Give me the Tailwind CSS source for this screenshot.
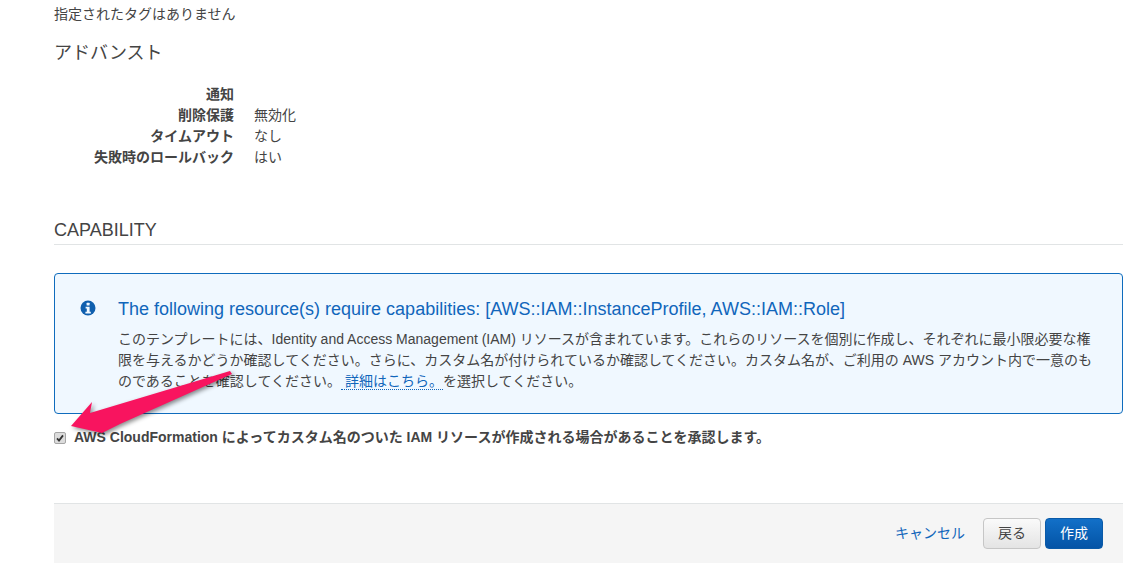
<!DOCTYPE html>
<html lang="ja">
<head>
  <meta charset="UTF-8" />
  <title>CloudFormation - Review</title>
  <script src="https://cdn.jsdelivr.net/npm/@tailwindcss/browser@4"></script>
</head>
<body class="bg-white h-[572px] overflow-hidden relative text-[14px] leading-[21px] text-[#444] font-['Liberation_Sans','Noto_Sans_CJK_JP',sans-serif]">

  <main class="ml-[54px] w-[1069px]">
    <!-- Tags -->
    <p class="pt-[4px]">指定されたタグはありません</p>

    <!-- Advanced -->
    <h2 class="mt-[16px] text-[18px] leading-[24px]">アドバンスト</h2>
    <dl class="mt-[19px] grid grid-cols-[180px_1fr] gap-x-[20px]">
      <dt class="font-bold text-right">通知</dt><dd></dd>
      <dt class="font-bold text-right">削除保護</dt><dd>無効化</dd>
      <dt class="font-bold text-right">タイムアウト</dt><dd>なし</dd>
      <dt class="font-bold text-right">失敗時のロールバック</dt><dd>はい</dd>
    </dl>

    <!-- Capability -->
    <h2 class="mt-[50px] pb-[2px] text-[18px] leading-[24px] border-b border-[#e1e4e5]">CAPABILITY</h2>

    <div class="mt-[28px] h-[141px] flex border border-[#0f6cbd] rounded-[4px] bg-[#f0f8ff]">
      <div class="w-[63px] shrink-0 pt-[26px] pl-[25px]">
        <svg class="w-[16px] h-[16px]" viewBox="0 0 16 16">
          <circle cx="8" cy="8" r="7.5" fill="#0f5fae" />
          <rect x="6.6" y="2.8" width="3" height="2.8" rx="0.5" fill="#f0f8ff" />
          <path d="M5.6 6.8h4v5h1.2v1.6H5.4v-1.6h1.4V8.4H5.6z" fill="#f0f8ff" />
        </svg>
      </div>
      <div class="w-[985px] pt-[23px]">
        <h3 class="text-[18px] leading-[24px] text-[#1166bb]">The following resource(s) require capabilities: [AWS::IAM::InstanceProfile, AWS::IAM::Role]</h3>
        <p class="mt-[8px]">このテンプレートには、Identity and Access Management (IAM) リソースが含まれています。これらのリソースを個別に作成し、それぞれに最小限必要な権限を与えるかどうか確認してください。さらに、カスタム名が付けられているか確認してください。カスタム名が、ご利用の AWS アカウント内で一意のものであることを確認してください。<a href="#" class="pl-[4px] text-[#1166bb] border-b border-dotted border-[#1166bb]">詳細はこちら。</a>を選択してください。</p>
      </div>
    </div>

    <label class="mt-[13px] flex items-center gap-[8px] font-bold">
      <span class="relative w-[12px] h-[12px] shrink-0">
        <input type="checkbox" checked class="appearance-none block w-[12px] h-[12px] rounded-[2px] border border-[#a5a5a5] bg-[#dcdcdc]" />
        <svg class="absolute left-[2px] top-[2px] w-[8px] h-[8px]" viewBox="0 0 8 8">
          <path d="M1 4.4 3 6.6 7 1.4" fill="none" stroke="#333" stroke-width="1.8" />
        </svg>
      </span>
      <span>AWS CloudFormation によってカスタム名のついた IAM リソースが作成される場合があることを承認します。</span>
    </label>

    <!-- Footer -->
    <div class="mt-[55px] h-[60px] flex items-center justify-end gap-[18px] pr-[20px] bg-[#f5f5f5] border-t border-[#e1e4e5]">
      <a href="#" class="text-[#1166bb]">キャンセル</a>
      <div class="flex gap-[4px]">
        <button class="w-[58px] h-[31px] rounded-[4px] border border-[#c6c6c6] bg-gradient-to-b from-[#fafafa] to-[#e4e4e4] text-[#444]">戻る</button>
        <button class="w-[58px] h-[31px] rounded-[4px] border border-[#0a5aa8] bg-gradient-to-b from-[#1270c8] to-[#0554a6] text-white">作成</button>
      </div>
    </div>
  </main>

  <!-- Annotation arrow -->
  <svg class="absolute left-0 top-0 pointer-events-none drop-shadow-[2px_2px_2px_rgba(0,0,0,0.45)]" width="300" height="460" viewBox="0 0 300 460">
    <polygon points="230,371 232,374 120,424 102,433 71,426 92,402 90,413" fill="#f8145f" />
  </svg>
</body>
</html>
